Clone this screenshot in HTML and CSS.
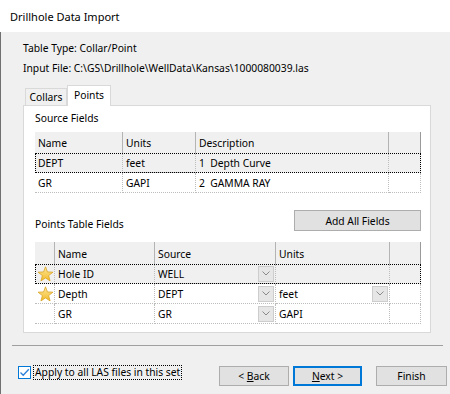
FILE: index.html
```html
<!DOCTYPE html>
<html>
<head>
<meta charset="utf-8">
<link rel="stylesheet" href="styles.css">
</head>
<body>
<div class="window">
  <div class="titlebar">Drillhole Data Import</div>
  <div class="main">
    <div class="line">Table Type: Collar/Point</div>
    <div class="line">Input File: C:\GS\Drillhole\WellData\Kansas\1000080039.las</div>
    <div class="tabs">
      <div class="tab">Collars</div>
      <div class="tab active">Points</div>
    </div>
    <div class="panel">
      <div class="label srclabel">Source Fields</div>
      <div class="table src">
        <div class="row head">
          <div class="cell">Name</div>
          <div class="cell">Units</div>
          <div class="cell">Description</div>
          <div class="cell last"></div>
        </div>
        <div class="row focus">
          <div class="cell">DEPT</div>
          <div class="cell">feet</div>
          <div class="cell">1&nbsp; Depth Curve</div>
          <div class="cell"></div>
        </div>
        <div class="row">
          <div class="cell">GR</div>
          <div class="cell">GAPI</div>
          <div class="cell">2&nbsp; GAMMA RAY</div>
          <div class="cell"></div>
        </div>
      </div>
      <div class="midrow">
        <span class="label ptlabel">Points Table Fields</span>
        <button class="btn addall">Add All Fields</button>
      </div>
      <div class="table pts">
        <div class="row head">
          <div class="cell"></div>
          <div class="cell">Name</div>
          <div class="cell">Source</div>
          <div class="cell">Units</div>
          <div class="cell last"></div>
        </div>
        <div class="row focus">
          <div class="cell star"><svg width="17" height="16" viewBox="0 0 16 16"><defs><linearGradient id="sg" x1="0" y1="0" x2="0" y2="1"><stop offset="0" stop-color="#fde79a"/><stop offset="1" stop-color="#f3bb2a"/></linearGradient></defs><polygon points="8,0.8 9.94,5.93 15.42,6.19 11.14,9.62 12.59,14.91 8,11.9 3.41,14.91 4.86,9.62 0.58,6.19 6.06,5.93" fill="url(#sg)" stroke="#d9a324" stroke-width="0.8" stroke-linejoin="round"/></svg></div>
          <div class="cell">Hole ID</div>
          <div class="cell">WELL<span class="dd"><svg width="8" height="5" viewBox="0 0 8 5"><path d="M0.5 0.5 L4 4 L7.5 0.5" fill="none" stroke="#8a8a8a" stroke-width="1"/></svg></span></div>
          <div class="cell"></div>
          <div class="cell"></div>
        </div>
        <div class="row">
          <div class="cell star"><svg width="17" height="16" viewBox="0 0 16 16"><polygon points="8,0.8 9.94,5.93 15.42,6.19 11.14,9.62 12.59,14.91 8,11.9 3.41,14.91 4.86,9.62 0.58,6.19 6.06,5.93" fill="url(#sg)" stroke="#d9a324" stroke-width="0.8" stroke-linejoin="round"/></svg></div>
          <div class="cell">Depth</div>
          <div class="cell">DEPT<span class="dd"><svg width="8" height="5" viewBox="0 0 8 5"><path d="M0.5 0.5 L4 4 L7.5 0.5" fill="none" stroke="#8a8a8a" stroke-width="1"/></svg></span></div>
          <div class="cell">feet<span class="dd"><svg width="8" height="5" viewBox="0 0 8 5"><path d="M0.5 0.5 L4 4 L7.5 0.5" fill="none" stroke="#8a8a8a" stroke-width="1"/></svg></span></div>
          <div class="cell"></div>
        </div>
        <div class="row">
          <div class="cell"></div>
          <div class="cell">GR</div>
          <div class="cell">GR<span class="dd"><svg width="8" height="5" viewBox="0 0 8 5"><path d="M0.5 0.5 L4 4 L7.5 0.5" fill="none" stroke="#8a8a8a" stroke-width="1"/></svg></span></div>
          <div class="cell">GAPI</div>
          <div class="cell"></div>
        </div>
      </div>
    </div>
    <div class="sep"></div>
    <div class="footer">
      <div class="check">
        <span class="box"><svg width="11" height="11" viewBox="0 0 11 11"><path d="M1.5 5.5 L4.2 8.2 L9.8 2.2" fill="none" stroke="#2b7fd9" stroke-width="1.3"/></svg></span>
        <span class="cblabel">Apply to all LAS files in this set</span>
      </div>
      <div class="buttons">
        <button class="btn back">&lt; <u>B</u>ack</button>
        <button class="btn next"><u>N</u>ext &gt;</button>
        <button class="btn finish">Finish</button>
      </div>
    </div>
  </div>
</div>
</body>
</html>
```
FILE: styles.css
```css
* { box-sizing: border-box; }
html, body { margin: 0; padding: 0; }
body {
  width: 450px;
  height: 394px;
  overflow: hidden;
  background: #f0f0f0;
  font-family: "Noto Sans", "Segoe UI", sans-serif;
  font-size: 10.3px;
  color: #000;
}
.window {
  width: 450px;
  height: 394px;
  display: flex;
  flex-direction: column;
}
.titlebar {
  height: 32px;
  flex: none;
  background: #fff;
  display: flex;
  align-items: center;
  padding-left: 10px;
  font-size: 11px;
}
.main {
  flex: 1;
  border-left: 1px solid #707070;
  padding: 6px 0 0 22px;
}
.line {
  height: 20px;
  line-height: 20px;
  white-space: nowrap;
}
.tabs {
  display: flex;
  align-items: flex-end;
  height: 20px;
  margin-top: 7px;
  padding-left: 2px;
}
.tab {
  width: 42px;
  height: 17px;
  border: 1px solid #d9d9d9;
  border-bottom: none;
  background: #f0f0f0;
  text-align: center;
  line-height: 16px;
}
.tab.active {
  width: 44px;
  height: 21px;
  margin-bottom: -1px;
  background: #fff;
  line-height: 18px;
  position: relative;
  z-index: 1;
}
.panel {
  width: 408px;
  height: 228px;
  background: #fff;
  border: 1px solid #d9d9d9;
  padding: 5px 0 0 11px;
}
.label {
  line-height: 14px;
  display: block;
}
.srclabel { margin-bottom: 7px; }
.table { width: 386px; }
.row {
  display: grid;
  height: 20px;
}
.src .row { grid-template-columns: 88px 73px 193px 32px; }
.pts .row { grid-template-columns: 20px 100px 121px 114px 31px; }
.row.head {
  height: 21px;
  background: #f0f0f0;
}
.pts .row.head { height: 22px; }
.cell {
  display: flex;
  align-items: center;
  padding-left: 3px;
  white-space: nowrap;
  border-right: 1px dotted #bdbdbd;
  border-bottom: 1px dotted #bdbdbd;
}
.head .cell {
  border-bottom: none;
  border-right: 1px solid #b4b4b4;
  padding-top: 1px;
}
.head .cell.last { border-right: 1px solid #9a9a9a; }
.row.focus {
  background: #f0f0f0;
  outline: 1px dotted #000;
  outline-offset: -1px;
}
.cell.star {
  padding-left: 1px;
  justify-content: center;
}
.dd {
  margin-left: auto;
  margin-right: 1px;
  width: 16px;
  height: 16px;
  border: 1px solid #cdcdcd;
  background: #e6e6e6;
  display: flex;
  align-items: center;
  justify-content: center;
}
.midrow {
  width: 386px;
  height: 21px;
  margin-top: 17px;
  margin-bottom: 11px;
  display: flex;
  justify-content: space-between;
  align-items: flex-end;
}
.btn {
  font-family: inherit;
  font-size: inherit;
  color: #000;
  background: #e1e1e1;
  border: 1px solid #adadad;
  padding: 0;
  margin: 0;
  height: 20px;
}
.btn u { text-decoration: underline; }
.addall {
  width: 127px;
  height: 21px;
}
.sep {
  width: 431px;
  height: 1px;
  margin: 12px 0 0 -11px;
  background: #a0a0a0;
}
.footer {
  width: 429px;
  margin: 18px 0 0 -5px;
  display: flex;
  align-items: flex-start;
}
.check {
  display: flex;
  align-items: center;
  height: 16px;
}
.box {
  width: 13px;
  height: 13px;
  border: 1px solid #0078d7;
  background: #fff;
  display: flex;
  align-items: center;
  justify-content: center;
  margin-right: 2px;
}
.cblabel {
  outline: 1px dotted #000;
  outline-offset: -1px;
  padding: 0 2px;
  line-height: 15px;
  white-space: nowrap;
}
.buttons {
  margin-left: auto;
  margin-top: 2px;
  display: flex;
}
.back { width: 70px; }
.next {
  width: 69px;
  margin-left: 4px;
  border: 2px solid #0078d7;
}
.finish {
  width: 71px;
  margin-left: 14px;
}
```
